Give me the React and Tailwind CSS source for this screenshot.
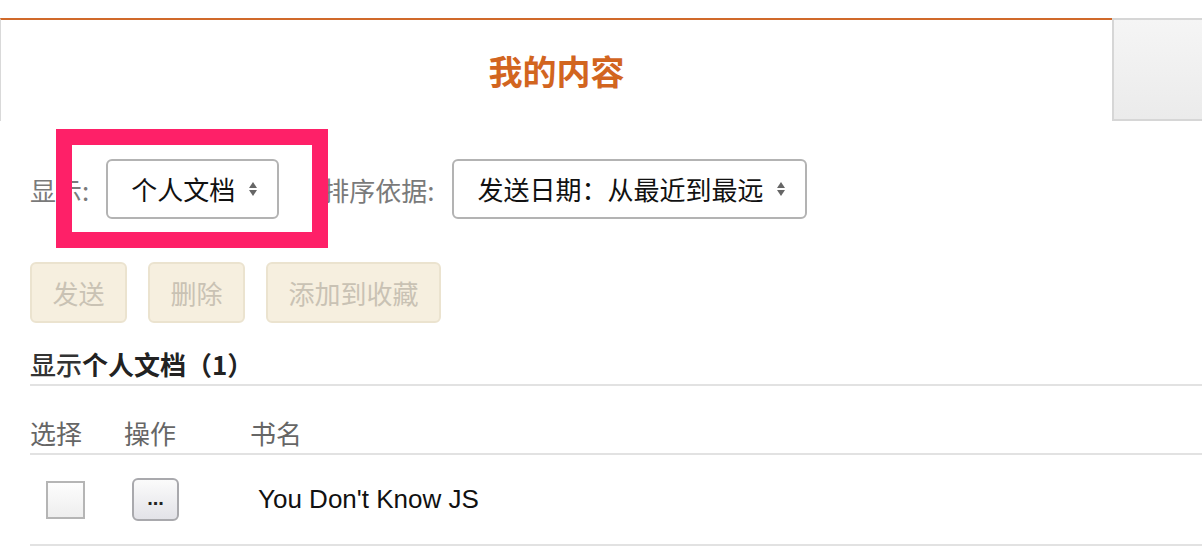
import React from 'react';

const cjk = "font-['Noto_Sans_CJK_SC','Noto_Sans',sans-serif]";

function UpDown() {
  return (
    <svg width="10" height="16" viewBox="0 0 10 16" className="shrink-0">
      <path d="M5 1 L9 7 H1 Z" fill="#666" />
      <path d="M5 15 L9 9 H1 Z" fill="#666" />
    </svg>
  );
}

function Select({ label, width }) {
  return (
    <div
      className={`flex items-center justify-between h-[60px] ${width} pl-[23px] pr-[19px] border-2 border-[#b3b3b3] rounded-[6px] bg-white text-[26px] text-[#111]`}
    >
      <span className="leading-none">{label}</span>
      <UpDown />
    </div>
  );
}

function ActionButton({ children, width }) {
  return (
    <div
      className={`flex items-center justify-center h-[61px] ${width} rounded-[6px] border-2 border-[#ebe3cf] bg-[#f6efdf] text-[26px] text-[#c9c2b4]`}
    >
      {children}
    </div>
  );
}

export default function App() {
  return (
    <div className={`relative w-[1202px] h-[548px] overflow-hidden bg-white ${cjk}`}>
      {/* Tab header */}
      <div className="flex pt-[18px] h-[121px]">
        <div className="flex-1 flex items-center justify-center border-t-2 border-t-[#d0692a] border-l border-l-[#d9d9d9]">
          <span className="text-[34px] font-bold text-[#d2651f] leading-none">我的内容</span>
        </div>
        <div className="w-[90px] border-2 border-r-0 border-[#d6d6d6] bg-gradient-to-b from-[#f5f5f5] to-[#ebebeb]" />
      </div>

      <div className="pl-[30px]">
        {/* Filters */}
        <div className="flex items-center mt-[38px]">
          <span className="text-[26px] text-[#7a7a7a] mr-[17px]">显示:</span>
          <Select label="个人文档" width="w-[173px]" />
          <span className="text-[26px] text-[#7a7a7a] ml-[44px] mr-[18px]">排序依据:</span>
          <Select label="发送日期：从最近到最远" width="w-[355px]" />
        </div>

        {/* Actions */}
        <div className="flex items-center gap-[21px] mt-[43px]">
          <ActionButton width="w-[97px]">发送</ActionButton>
          <ActionButton width="w-[97px]">删除</ActionButton>
          <ActionButton width="w-[175px]">添加到收藏</ActionButton>
        </div>

        {/* Section title */}
        <div className="pt-[27px] pb-[6px] leading-[28px] text-[26px] border-b-2 border-[#e2e2e2]">
          <span className="font-medium text-[#333]">显示</span>
          <span className="font-bold text-[#222]">个人文档（1）</span>
        </div>

        {/* Table header */}
        <div className="grid grid-cols-[94px_126px_1fr] pt-[34px] pb-[7px] leading-[26px] text-[26px] text-[#666] border-b-2 border-[#e2e2e2]">
          <span>选择</span>
          <span>操作</span>
          <span>书名</span>
        </div>

        {/* Row */}
        <div className="grid grid-cols-[94px_126px_1fr] items-center h-[91px] border-b-2 border-[#e2e2e2]">
          <div className="pl-[16px]">
            <div className="w-[39px] h-[38px] border-2 border-[#b5b5b5] bg-gradient-to-b from-[#fdfdfd] to-[#eeeeee]" />
          </div>
          <div className="pl-[8px]">
            <div className="flex items-center justify-center w-[47px] h-[43px] rounded-[6px] border-2 border-[#a9a9ad] bg-gradient-to-b from-[#fbfbfb] to-[#e3e3e8] font-['Liberation_Sans',sans-serif] text-[20px] font-bold text-[#222] leading-none pb-[4px]">
              ...
            </div>
          </div>
          <span className="pl-[8px] font-['Liberation_Sans',sans-serif] text-[26px] text-[#111]">You Don't Know JS</span>
        </div>
      </div>

      {/* Highlight annotation */}
      <div className="absolute left-[56px] top-[129px] w-[272px] h-[119px] border-[16px] border-[#fe2068]" />
    </div>
  );
}
